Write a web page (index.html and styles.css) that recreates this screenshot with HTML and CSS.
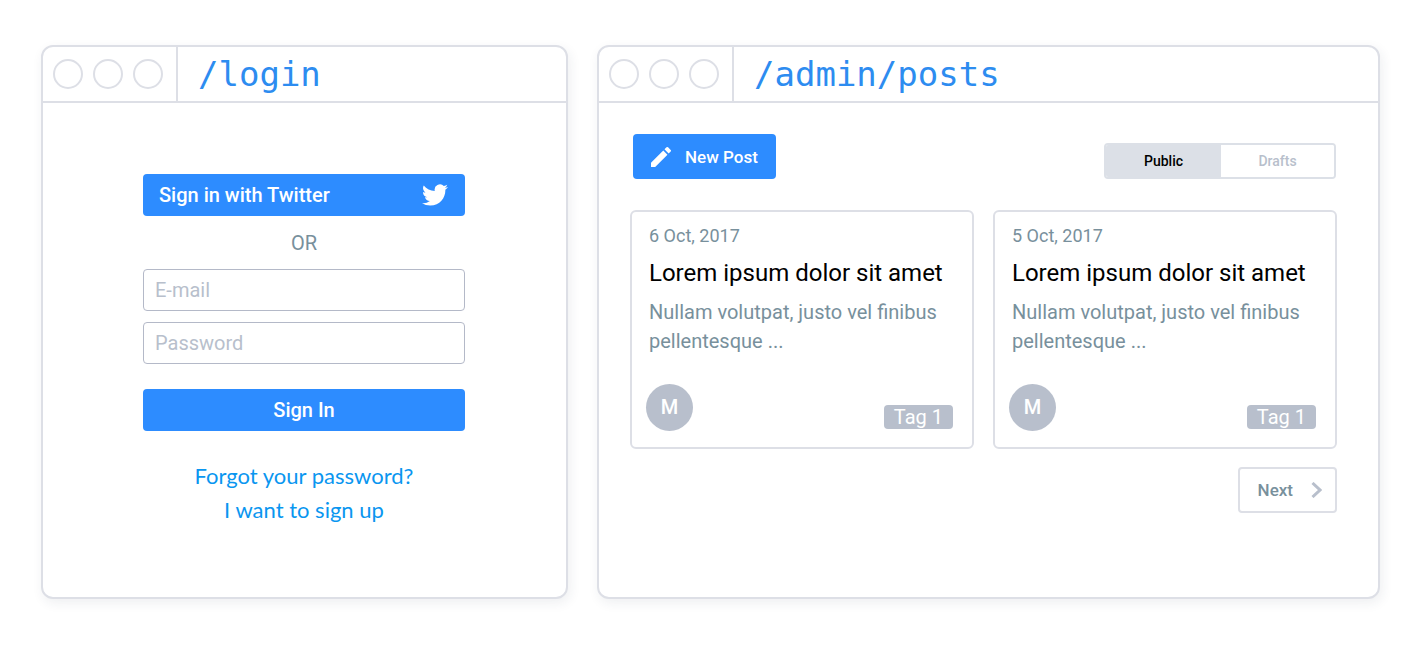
FILE: index.html
```html
<!DOCTYPE html>
<html lang="en">
<head>
<meta charset="utf-8">
<title>Login and admin posts</title>
<link rel="stylesheet" href="styles.css">
</head>
<body>
<main class="stage">
  <section class="window">
    <header class="window-bar">
      <div class="dots"><span class="dot"></span><span class="dot"></span><span class="dot"></span></div>
      <h1 class="path">/login</h1>
    </header>
    <form class="login">
      <button class="btn btn-twitter" type="button">
        Sign in with Twitter
        <svg class="bird" viewBox="0 0 24 24" aria-hidden="true"><path d="M23.95 4.57a10 10 0 0 1-2.82.77 4.96 4.96 0 0 0 2.16-2.72c-.95.55-2 .95-3.13 1.18a4.92 4.92 0 0 0-8.38 4.48C7.69 8.1 4.07 6.13 1.64 3.16a4.93 4.93 0 0 0 1.52 6.57 4.9 4.9 0 0 1-2.23-.61v.06a4.92 4.92 0 0 0 3.95 4.83 5 5 0 0 1-2.21.08 4.94 4.94 0 0 0 4.6 3.42A9.87 9.87 0 0 1 0 19.54a13.99 13.99 0 0 0 7.55 2.21c9.05 0 14-7.5 14-13.98 0-.21 0-.42-.02-.63a9.94 9.94 0 0 0 2.46-2.55z"/></svg>
      </button>
      <p class="or">OR</p>
      <div class="fields">
        <input class="field" type="email" placeholder="E-mail" aria-label="E-mail">
        <input class="field" type="password" placeholder="Password" aria-label="Password">
      </div>
      <button class="btn btn-signin" type="submit">Sign In</button>
      <nav class="links">
        <a href="#forgot">Forgot your password?</a>
        <a href="#signup">I want to sign up</a>
      </nav>
    </form>
  </section>

  <section class="window">
    <header class="window-bar">
      <div class="dots"><span class="dot"></span><span class="dot"></span><span class="dot"></span></div>
      <h1 class="path">/admin/posts</h1>
    </header>
    <div class="admin">
      <div class="toolbar">
        <button class="btn btn-new" type="button">
          <svg class="pencil" viewBox="3 3 18 18" aria-hidden="true"><path d="M3 17.25V21h3.75L17.81 9.94l-3.75-3.75L3 17.25zM20.71 7.04a1 1 0 0 0 0-1.41l-2.34-2.34a1 1 0 0 0-1.41 0l-1.83 1.83 3.75 3.75 1.83-1.83z"/></svg>
          New Post
        </button>
        <div class="toggle">
          <button class="tab tab-active" type="button" aria-pressed="true">Public</button>
          <button class="tab" type="button" aria-pressed="false">Drafts</button>
        </div>
      </div>
      <div class="cards">
        <article class="card">
          <div class="card-text">
            <time class="date" datetime="2017-10-06">6 Oct, 2017</time>
            <h2 class="title">Lorem ipsum dolor sit amet</h2>
            <p class="excerpt">Nullam volutpat, justo vel finibus pellentesque ...</p>
          </div>
          <footer class="card-foot"><span class="avatar">M</span><span class="tag">Tag 1</span></footer>
        </article>
        <article class="card">
          <div class="card-text">
            <time class="date" datetime="2017-10-05">5 Oct, 2017</time>
            <h2 class="title">Lorem ipsum dolor sit amet</h2>
            <p class="excerpt">Nullam volutpat, justo vel finibus pellentesque ...</p>
          </div>
          <footer class="card-foot"><span class="avatar">M</span><span class="tag">Tag 1</span></footer>
        </article>
      </div>
      <button class="next" type="button">
        Next
        <svg class="chevron" viewBox="0 0 11 16" aria-hidden="true"><path d="M1.500 1 9 8l-7.500 7"/></svg>
      </button>
    </div>
  </section>
</main>
</body>
</html>
```
FILE: styles.css
```css
* { box-sizing: border-box; }

body {
  margin: 0;
  background: #fff;
  color: #78909c;
  font-family: Roboto, "Liberation Sans", sans-serif;
  font-size: 20px;
}

h1, h2, p { margin: 0; font-weight: 400; }
button, input { font: inherit; }
button { cursor: pointer; }

.stage {
  display: grid;
  grid-template-columns: 527fr 783fr;
  gap: 29px;
  padding: 45px 40px 50px 41px;
}

.window {
  background: #fff;
  border: 2px solid #dddfe6;
  border-radius: 12px;
  box-shadow: 2px 4px 12px rgba(40, 50, 80, 0.08);
}

.window-bar {
  display: flex;
  height: 56px;
  border-bottom: 2px solid #dddfe6;
}

.dots {
  display: flex;
  align-items: center;
  gap: 10px;
  padding: 0 13px 0 10px;
  border-right: 2px solid #dddfe6;
}

.dot {
  width: 30px;
  height: 30px;
  border: 2px solid #dddfe6;
  border-radius: 50%;
}

.path {
  padding-left: 20px;
  color: #2d8cf0;
  font-family: "DejaVu Sans Mono", monospace;
  font-size: 34px;
  line-height: 54px;
}

.btn {
  display: flex;
  align-items: center;
  border: 0;
  border-radius: 4px;
  background: #2d8cff;
  color: #fff;
  font-weight: 500;
}

.login {
  display: flex;
  flex-direction: column;
  padding: 71px 101px 70px 100px;
}

.btn-twitter {
  justify-content: space-between;
  height: 42px;
  padding: 0 17px 0 16px;
}

.bird { width: 26px; height: 26px; fill: #fff; }

.or {
  padding: 12px 0 11px;
  line-height: 30px;
  text-align: center;
}

.fields { display: grid; gap: 11px; }

.field {
  width: 100%;
  height: 42px;
  padding: 0 11px;
  border: 1px solid #b4b9c8;
  border-radius: 4px;
  background: #fff;
  color: #78909c;
}

.field::placeholder { color: #b8bfcc; opacity: 1; }

.btn-signin {
  justify-content: center;
  height: 42px;
  margin-top: 25px;
}

.links {
  display: flex;
  flex-direction: column;
  align-items: center;
  margin-top: 28px;
  font-family: Lato, sans-serif;
  font-size: 22px;
  line-height: 34px;
}

.links a { color: #0a96f0; text-decoration: none; }

.admin {
  display: flex;
  flex-direction: column;
  padding: 31px 41px 84px 31px;
}

.toolbar {
  display: flex;
  align-items: flex-end;
  justify-content: space-between;
  padding: 0 1px 0 3px;
}

.btn-new {
  height: 45px;
  gap: 14px;
  padding: 0 18px;
  font-size: 17px;
}

.pencil { width: 20px; height: 20px; fill: #fff; }

.toggle {
  display: grid;
  grid-template-columns: 115fr 113fr;
  width: 232px;
  height: 36px;
  overflow: hidden;
  border: 2px solid #dce0e7;
  border-radius: 4px;
}

.tab {
  border: 0;
  background: #fff;
  color: #b8bfcc;
  font-size: 14px;
  font-weight: 500;
}

.tab-active { background: #dce0e7; color: #000; }

.cards {
  display: grid;
  grid-template-columns: 1fr 1fr;
  gap: 19px;
  margin-top: 31px;
}

.card {
  padding: 12px 19px 16px 14px;
  border: 2px solid #dddfe6;
  border-radius: 6px;
}

.card-text { padding-left: 3px; }

.date {
  display: block;
  font-size: 18px;
  line-height: 24px;
}

.title {
  margin: 9px 0;
  color: #000;
  font-size: 24px;
  line-height: 32px;
  white-space: nowrap;
}

.excerpt { line-height: 29px; }

.card-foot {
  display: flex;
  align-items: flex-end;
  justify-content: space-between;
  margin-top: 28px;
}

.avatar {
  width: 47px;
  height: 47px;
  border-radius: 50%;
  background: #b8bfcc;
  color: #fff;
  font-weight: 500;
  line-height: 47px;
  text-align: center;
}

.tag {
  margin-bottom: 2px;
  padding: 0 10px;
  border-radius: 4px;
  background: #b8bfcc;
  color: #fff;
  line-height: 24px;
}

.next {
  display: flex;
  align-items: center;
  align-self: flex-end;
  gap: 18px;
  height: 46px;
  margin-top: 18px;
  padding: 0 13px 0 18px;
  border: 2px solid #dddfe6;
  border-radius: 4px;
  background: #fff;
  color: #78909c;
  font-size: 17px;
  font-weight: 500;
}

.chevron {
  width: 11px;
  height: 16px;
  fill: none;
  stroke: #b8bfcc;
  stroke-width: 3;
}
```
